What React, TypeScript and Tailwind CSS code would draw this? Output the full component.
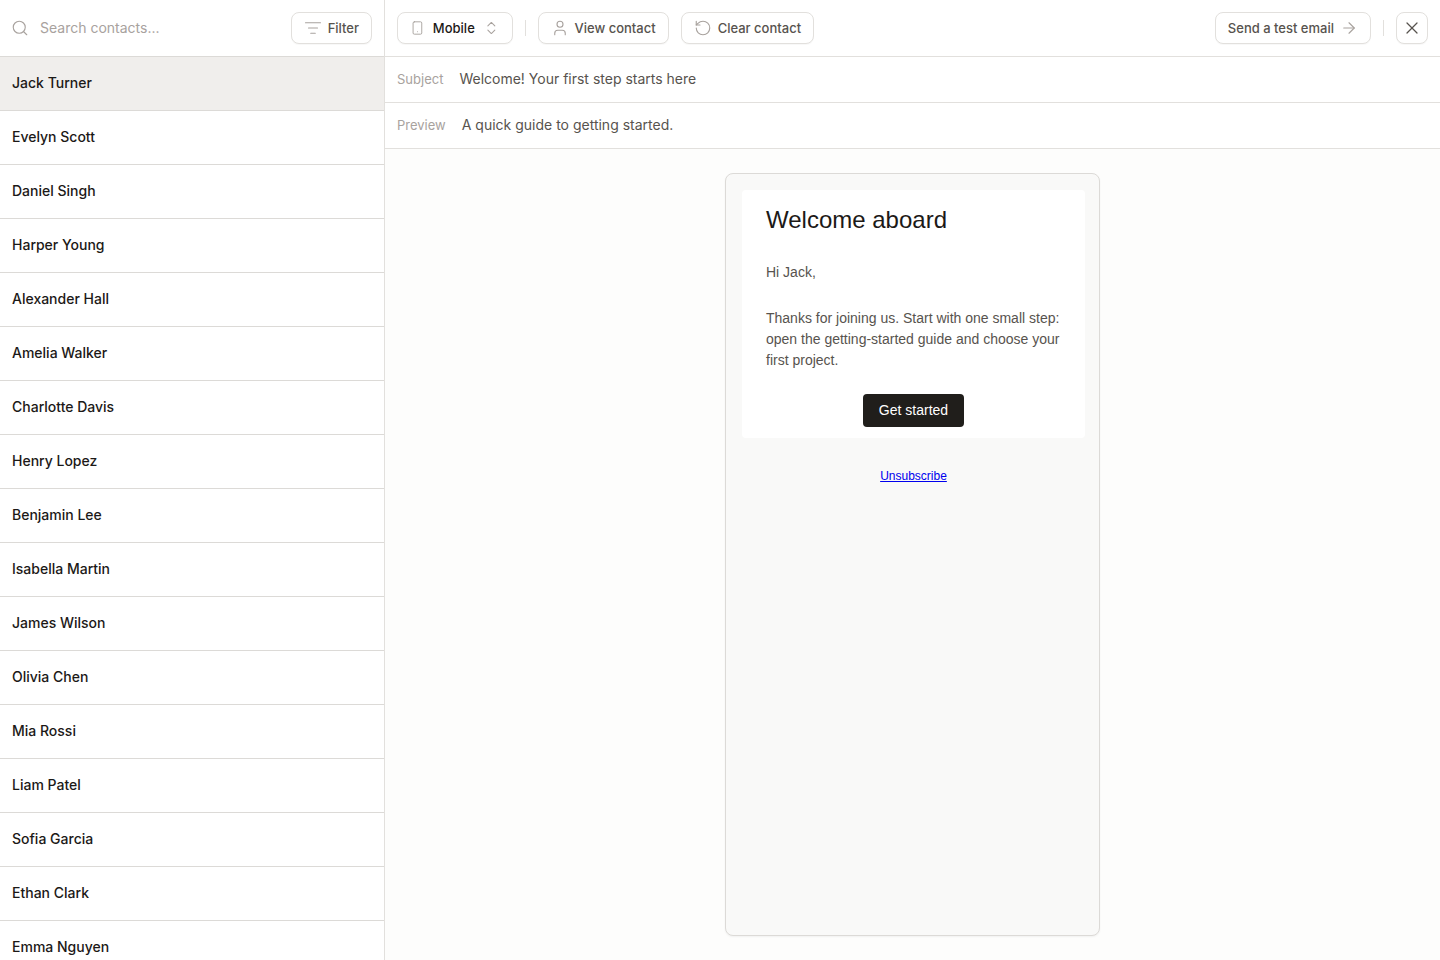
import { ArrowRight, ChevronsUpDown, ListFilter, RotateCcw, Search, Smartphone, User, X } from "lucide-react";

const contacts = [
  "Jack Turner",
  "Evelyn Scott",
  "Daniel Singh",
  "Harper Young",
  "Alexander Hall",
  "Amelia Walker",
  "Charlotte Davis",
  "Henry Lopez",
  "Benjamin Lee",
  "Isabella Martin",
  "James Wilson",
  "Olivia Chen",
  "Mia Rossi",
  "Liam Patel",
  "Sofia Garcia",
  "Ethan Clark",
  "Emma Nguyen",
];

const btn =
  "h-8 flex items-center rounded-lg border border-[#e2e0dd] bg-white text-[13px] font-medium text-[#57534e] shadow-[0_1px_1px_rgba(0,0,0,0.03)]";

const App = () => {
  return (
    <div className="flex h-[960px] w-[1440px] overflow-hidden bg-white font-['Inter',sans-serif]">
      {/* Contacts */}
      <aside className="w-[385px] shrink-0 border-r border-[#e2e0dd] flex flex-col">
        <div className="h-[57px] shrink-0 flex items-center justify-between px-3 border-b border-[#dcdad7]">
          <div className="flex items-center gap-[11px] -ml-px">
            <Search className="w-[18px] h-[18px] text-[#a8a29e]" strokeWidth={1.5} />
            <span className="text-[14px] text-[#a8a29e] pb-px">Search contacts...</span>
          </div>
          <button className={`${btn} px-3 gap-1.5`}>
            <ListFilter className="w-[18px] h-[18px] text-[#a8a29e]" strokeWidth={1.5} />
            <span className="pt-[2px]">Filter</span>
          </button>
        </div>
        <div className="flex-1 overflow-hidden">
          {contacts.map((name, i) => (
            <div
              key={name}
              className={`h-[54px] flex items-center px-3 pb-[2px] border-b border-[#dcdad7] text-[14px] font-medium text-[#1c1917] ${
                i === 0 ? "bg-[#f0eeec]" : "bg-white"
              }`}
            >
              {name}
            </div>
          ))}
        </div>
      </aside>

      {/* Preview */}
      <main className="flex-1 flex flex-col min-w-0">
        <div className="h-[57px] shrink-0 flex items-center px-3 border-b border-[#e2e0dd]">
          <button className={`${btn} w-[115.5px] px-3 gap-2`}>
            <Smartphone className="w-4 h-4 text-[#a8a29e]" strokeWidth={1.5} />
            <span className="text-[#1c1917] pt-[2px]">Mobile</span>
            <ChevronsUpDown className="w-[18px] h-[18px] ml-auto text-[#a8a29e]" strokeWidth={1.5} />
          </button>
          <div className="w-px h-4 bg-[#e2e0dd] mx-3" />
          <button className={`${btn} px-3 gap-1.5`}>
            <User className="w-[18px] h-[18px] text-[#a8a29e]" strokeWidth={1.5} />
            <span className="pt-[2px]">View contact</span>
          </button>
          <button className={`${btn} px-3 gap-1.5 ml-3`}>
            <RotateCcw className="w-[18px] h-[18px] text-[#a8a29e]" strokeWidth={1.5} />
            <span className="pt-[2px]">Clear contact</span>
          </button>
          <button className={`${btn} px-3 gap-1.5 ml-auto`}>
            <span className="pt-[2px]">Send a test email</span>
            <ArrowRight className="w-[18px] h-[18px] text-[#a8a29e]" strokeWidth={1.5} />
          </button>
          <div className="w-px h-4 bg-[#e2e0dd] mx-3" />
          <button className={`${btn} w-8 justify-center`}>
            <X className="w-5 h-5 text-[#57534e]" strokeWidth={1.5} />
          </button>
        </div>

        <div className="h-[46px] shrink-0 flex items-center gap-4 px-3 border-b border-[#e2e0dd]">
          <span className="text-[13px] text-[#a8a29e]">Subject</span>
          <span className="text-[14px] text-[#57534e] pb-[2px]">Welcome! Your first step starts here</span>
        </div>
        <div className="h-[46px] shrink-0 flex items-center gap-4 px-3 border-b border-[#e2e0dd]">
          <span className="text-[13px] text-[#a8a29e]">Preview</span>
          <span className="text-[14px] text-[#57534e] pb-[2px]">A quick guide to getting started.</span>
        </div>

        <div className="flex-1 bg-[#fdfdfc] flex justify-center pt-6 pb-6">
          <div className="w-[375px] h-full rounded-lg border border-[#dcdad7] bg-[#f9f9f8] pl-4 pr-[14px] pt-4 font-['Liberation_Sans',Arial,sans-serif] shadow-[0_1px_2px_rgba(0,0,0,0.05)]">
            <div className="bg-white rounded-sm px-6 pt-4 h-[248px]">
              <h1 className="text-[24px] leading-[28px] text-[#1c1917]">Welcome aboard</h1>
              <p className="mt-[28px] text-[14px] leading-[21px] text-[#57534e]">Hi Jack,</p>
              <p className="mt-[25px] text-[14px] leading-[21px] text-[#57534e]">
                Thanks for joining us. Start with one small step: open the getting-started guide and choose your first project.
              </p>
              <div className="flex justify-center mt-[23px]">
                <a className="h-[33px] w-[101px] flex items-center justify-center rounded bg-[#201e1b] text-[14px] text-white">
                  Get started
                </a>
              </div>
            </div>
            <div className="text-center mt-[30px] text-[12px] leading-4">
              <a href="#" className="text-[#0000ee] underline">
                Unsubscribe
              </a>
            </div>
          </div>
        </div>
      </main>
    </div>
  );
};

export default App;
